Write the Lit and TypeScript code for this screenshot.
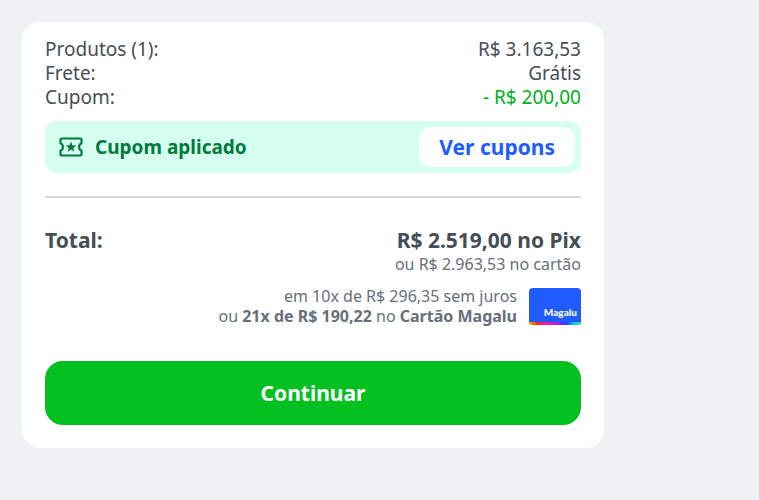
import { LitElement, type PropertyDeclarations, html, svg, css } from 'lit';

interface SummaryRow {
  label: string;
  value: string;
  discount?: boolean;
}

const ticketIcon = svg`<svg class="ticket" width="24" height="20" viewBox="0 0 24 20" aria-hidden="true">
  <path
    d="M2.8 1.5h18.4q1.3 0 1.3 1.3v3.4a4.2 4.2 0 0 0 0 7.6v3.4q0 1.3-1.3 1.3h-18.4q-1.3 0-1.3-1.3v-3.4a4.2 4.2 0 0 0 0-7.6v-3.4q0-1.3 1.3-1.3z"
    fill="none"
    stroke="currentColor"
    stroke-width="2.2"
    stroke-linejoin="round" />
  <path
    d="M12 4.6l1.4 3.7 3.9.2-3 2.4 1 3.8-3.3-2.1-3.3 2.1 1-3.8-3-2.4 3.9-.2z"
    fill="currentColor" />
</svg>`;

class StoreCard extends LitElement {
  render() {
    return html`<div class="card"><span class="brand">Magalu</span></div>
      <div class="stripe"></div>`;
  }

  static styles = css`
    :host {
      display: flex;
      flex-direction: column;
      flex: none;
      width: 52px;
      height: 37px;
      border-radius: 4px 4px 2px 2px;
      overflow: hidden;
    }
    .card {
      flex: 1;
      display: flex;
      justify-content: flex-end;
      align-items: flex-end;
      padding: 0 4px 4px 0;
      background-color: #1f5cff;
    }
    .brand {
      font: 900 10px/12px Lato, sans-serif;
      color: #fff;
    }
    .stripe {
      height: 3px;
      background: linear-gradient(90deg, #ffb000, #ff2828 16%, #ff18a8 36%, #a020f0 56%, #2838ff 72%, #00c8ff 86%, #20e870);
    }
  `;
}

class OrderSummary extends LitElement {
  static properties: PropertyDeclarations = {
    rows: { attribute: false },
  };

  rows: SummaryRow[];

  constructor() {
    super();
    this.rows = [
      { label: 'Produtos (1):', value: 'R$ 3.163,53' },
      { label: 'Frete:', value: 'Grátis' },
      { label: 'Cupom:', value: '- R$ 200,00', discount: true },
    ];
  }

  render() {
    return html`<section class="summary">
      <dl class="rows">
        ${this.rows.map(
          (row) => html`<div class="row">
            <dt>${row.label}</dt>
            <dd class="${row.discount ? 'discount' : ''}">${row.value}</dd>
          </div>`
        )}
      </dl>
      <div class="coupon">
        ${ticketIcon}
        <span class="coupon-text">Cupom aplicado</span>
        <button class="coupon-button" type="button">Ver cupons</button>
      </div>
      <hr class="divider" />
      <div class="total">
        <span class="total-label">Total:</span>
        <div class="prices">
          <div class="pix">R$ 2.519,00 no Pix</div>
          <div class="card-price">ou R$ 2.963,53 no cartão</div>
        </div>
      </div>
      <div class="installments">
        <div class="installments-text">
          <div>em 10x de R$ 296,35 sem juros</div>
          <div>ou <b>21x de R$ 190,22</b> no <b>Cartão Magalu</b></div>
        </div>
        <store-card></store-card>
      </div>
      <button class="continue" type="button">Continuar</button>
    </section>`;
  }

  static styles = css`
    :host {
      display: block;
    }
    .summary {
      box-sizing: border-box;
      max-width: 582px;
      padding: 15px 23px 23px;
      border-radius: 18px;
      background-color: #fff;
      color: #464e55;
    }
    .rows {
      margin: 0;
      font-size: 19px;
      line-height: 24px;
    }
    .row {
      display: flex;
      justify-content: space-between;
    }
    dd {
      margin: 0;
    }
    .discount {
      color: #00b020;
    }
    .coupon {
      display: flex;
      align-items: center;
      margin-top: 12px;
      padding: 6px;
      border-radius: 12px;
      background-color: #d5ffef;
      color: #007a3d;
    }
    .ticket {
      flex: none;
      margin: 0 12px 0 8px;
    }
    .coupon-text {
      flex: 1;
      font-size: 19px;
      font-weight: 700;
    }
    button {
      border: none;
      font-family: inherit;
      font-size: 21px;
      font-weight: 700;
      cursor: pointer;
    }
    .coupon-button {
      height: 40px;
      padding: 0 20px;
      border-radius: 12px;
      background-color: #fff;
      color: #1f5cff;
    }
    .divider {
      height: 2px;
      margin: 23px 0 28px;
      border: none;
      background-color: #d3dade;
    }
    .total {
      display: flex;
      justify-content: space-between;
    }
    .total-label,
    .pix {
      font-size: 21px;
      font-weight: 700;
      line-height: 28px;
    }
    .prices {
      text-align: right;
    }
    .card-price,
    .installments {
      font-size: 16px;
      line-height: 20px;
      color: #65707a;
    }
    .installments {
      display: flex;
      justify-content: flex-end;
      align-items: center;
      gap: 12px;
      margin-top: 12px;
      text-align: right;
    }
    .continue {
      display: block;
      width: 100%;
      height: 64px;
      margin-top: 35px;
      border-radius: 18px;
      background-color: #00c11f;
      color: #fff;
    }
  `;
}

class AppRoot extends LitElement {
  render() {
    return html`<main class="page"><order-summary></order-summary></main>`;
  }

  static styles = css`
    :host {
      display: block;
      font-family: 'Noto Sans', sans-serif;
    }
    .page {
      box-sizing: border-box;
      min-height: 100vh;
      padding: 22px;
      background-color: #eef2f3;
    }
  `;
}

customElements.define('store-card', StoreCard);
customElements.define('order-summary', OrderSummary);
customElements.define('app-root', AppRoot);

export { AppRoot };
